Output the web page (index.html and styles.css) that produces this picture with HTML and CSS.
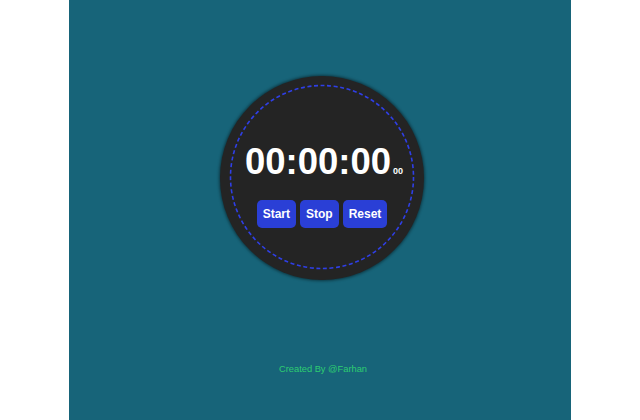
FILE: index.html
```html
<!DOCTYPE html>
<html>
<head>
<meta charset="utf-8">
<link rel="stylesheet" href="styles.css">
</head>
<body>
<main class="page">
  <section class="watch">
    <svg class="dash" width="204" height="204" viewBox="0 0 204 204" aria-hidden="true">
      <circle cx="102" cy="101" r="91.5" fill="none" stroke="#2f3fe6" stroke-width="1.6" stroke-dasharray="4 2.6"/>
    </svg>
    <div class="ring">
      <div class="time"><span class="main">00:00:00</span><span class="ms">00</span></div>
      <div class="controls">
        <button class="btn">Start</button>
        <button class="btn">Stop</button>
        <button class="btn">Reset</button>
      </div>
    </div>
  </section>
  <footer class="credit">Created By @Farhan</footer>
</main>
</body>
</html>
```
FILE: styles.css
```css
html, body {
  margin: 0;
  padding: 0;
  background: #ffffff;
  font-family: "Liberation Sans", Arial, sans-serif;
}
.page {
  width: 502px;
  height: 420px;
  margin: 0 auto;
  background: #176479;
  display: flex;
  flex-direction: column;
  align-items: center;
  box-sizing: border-box;
  padding-top: 76px;
  padding-left: 4px;
}
.watch {
  position: relative;
  width: 204px;
  height: 204px;
  border-radius: 50%;
  background: #242424;
  box-shadow: 0 0 3px 1px rgba(0,0,0,0.45);
  display: flex;
  align-items: center;
  justify-content: center;
}
.dash {
  position: absolute;
  left: 0;
  top: 0;
}
.ring {
  position: relative;
  width: 185px;
  height: 185px;
  display: flex;
  flex-direction: column;
  align-items: center;
  justify-content: center;
}
.time {
  color: #ffffff;
  font-weight: bold;
  display: flex;
  align-items: baseline;
  margin-top: 12px;
  margin-left: 4px;
}
.main {
  font-size: 36.5px;
}
.ms {
  font-size: 9px;
  margin-left: 2px;
}
.controls {
  display: flex;
  gap: 4px;
  margin-top: 17px;
}
.btn {
  background: #2a3fd6;
  color: #ffffff;
  font-family: "Liberation Sans", Arial, sans-serif;
  font-weight: bold;
  font-size: 12px;
  border: none;
  border-radius: 5px;
  padding: 7px 6px;
  line-height: 14px;
}
.credit {
  margin-top: 84px;
  color: #2ecc71;
  font-size: 9.3px;
  padding-left: 2px;
}
```
